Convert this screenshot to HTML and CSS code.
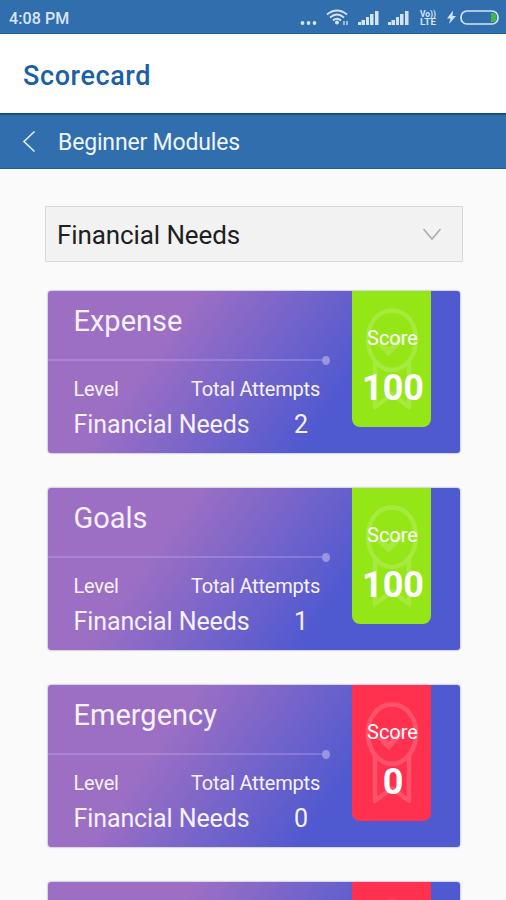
FILE: index.html
```html
<!DOCTYPE html>
<html lang="en">
<head>
<meta charset="utf-8">
<title>Scorecard</title>
<link rel="stylesheet" href="styles.css">
</head>
<body>
<svg class="defs" width="0" height="0">
  <symbol id="medal" viewBox="0 0 56 104">
    <g fill="none" stroke="currentColor" stroke-width="4.500" stroke-linejoin="round">
      <path d="M28 2.500C43 2.500 52 16 52 32C52 41 49 48 45 53V99L28 86L11 99V53C7 48 4 41 4 32C4 16 13 2.500 28 2.500ZM11 53C21 65 35 65 45 53"/>
      <path d="M16 35L24.500 44L39 29" stroke-width="6" stroke-linejoin="miter"/>
    </g>
  </symbol>
</svg>
<header class="status">
  <span class="time">4:08 PM</span>
  <svg class="status-icons" width="206" height="34" viewBox="300 0 206 34">
    <g fill="#d3e3f4">
      <circle cx="302.500" cy="23" r="1.900"/><circle cx="308.500" cy="23" r="1.900"/><circle cx="314.500" cy="23" r="1.900"/>
      <circle cx="337" cy="22.500" r="2"/>
      <path d="M343 21h2v4h-2zM346 21h2v4h-2z" opacity=".65"/>
      <path id="bars" d="M358 22h3v3h-3zM361.500 20h3.500v5h-3.500zM366 17h3v8h-3zM370 14h3.500v11H370zM375 11h3.500v14H375z"/>
      <use href="#bars" x="30"/>
      <path d="M453 10.500L447 18.500H450.500L449 24L456 16H452.500Z"/>
    </g>
    <g fill="none" stroke="#d3e3f4" stroke-width="2">
      <path d="M327 14.500Q337 6.500 347 14.500M330 17.500Q337 11.500 344 17.500M333 20.500Q337 17 341 20.500"/>
      <rect x="461" y="11" width="37" height="13" rx="6" stroke-width="1.700"/>
    </g>
    <path d="M491 13h2.500q3 0 3 4.500t-3 4.500H491z" fill="#43b649"/>
    <g class="volte"><text x="420" y="16.500" textLength="16" lengthAdjust="spacingAndGlyphs">Vo))</text><text x="420" y="25" textLength="16" lengthAdjust="spacingAndGlyphs">LTE</text></g>
  </svg>
</header>
<div class="title"><h1>Scorecard</h1></div>
<nav class="subbar">
  <svg width="14" height="24" viewBox="0 0 14 24"><path d="M12.500 1.500L2 11.500L12.500 21.500" fill="none" stroke="#e2edf8" stroke-width="1.600"/></svg>
  <span>Beginner Modules</span>
</nav>
<main>
  <div class="select">
    <span>Financial Needs</span>
    <svg width="20" height="14" viewBox="0 0 20 14"><path d="M1.500 1L10 11L18.500 1" fill="none" stroke="#aaa" stroke-width="1.500"/></svg>
  </div>
  <article class="card">
    <div class="info">
      <h2>Expense</h2>
      <div class="rule"></div>
      <dl><div><dt>Level</dt><dd>Financial Needs</dd></div><div class="attempts"><dt>Total Attempts</dt><dd>2</dd></div></dl>
    </div>
    <div class="score good"><svg class="medal"><use href="#medal"/></svg><span>Score</span><strong>100</strong></div>
  </article>
  <article class="card">
    <div class="info">
      <h2>Goals</h2>
      <div class="rule"></div>
      <dl><div><dt>Level</dt><dd>Financial Needs</dd></div><div class="attempts"><dt>Total Attempts</dt><dd>1</dd></div></dl>
    </div>
    <div class="score good"><svg class="medal"><use href="#medal"/></svg><span>Score</span><strong>100</strong></div>
  </article>
  <article class="card">
    <div class="info">
      <h2>Emergency</h2>
      <div class="rule"></div>
      <dl><div><dt>Level</dt><dd>Financial Needs</dd></div><div class="attempts"><dt>Total Attempts</dt><dd>0</dd></div></dl>
    </div>
    <div class="score bad"><svg class="medal"><use href="#medal"/></svg><span>Score</span><strong>0</strong></div>
  </article>
  <article class="card">
    <div class="info"></div>
    <div class="score bad"><svg class="medal"><use href="#medal"/></svg></div>
  </article>
</main>
</body>
</html>
```
FILE: styles.css
```css
* { box-sizing: border-box; }
body {
  margin: 0;
  height: 900px;
  overflow: hidden;
  background: #fafafa;
  font-family: Roboto, sans-serif;
}
h1, h2, dl, dt, dd { margin: 0; font-weight: 400; }
svg { display: block; }
.defs { display: none; }
.status {
  display: flex;
  justify-content: space-between;
  height: 34px;
  padding-left: 9px;
  background: #316eae;
  border-bottom: 1px solid #1d5c9f;
  color: #d9e7f5;
}
.time { font-size: 16px; font-weight: 500; letter-spacing: .1px; line-height: 37px; }
.volte { fill: #d3e3f4; font-size: 9px; font-weight: 700; }
.title { height: 79px; padding-left: 23px; background: #fff; }
.title h1 { font-size: 27px; font-weight: 500; letter-spacing: .6px; line-height: 84px; color: #1b60a5; }
.subbar {
  display: flex;
  align-items: center;
  gap: 22px;
  height: 56px;
  padding: 1px 0 0 22px;
  background: #316eae;
  border-top: 2px solid #164f8b;
  border-bottom: 1px solid #1f5d9e;
  color: #eef5fc;
  font-size: 23px;
  letter-spacing: -.17px;
}
main {
  display: flex;
  flex-direction: column;
  gap: 35px;
  height: 731px;
  overflow: hidden;
  padding: 37px 46.5px 0 48px;
}
.select {
  display: flex;
  align-items: center;
  justify-content: space-between;
  flex: none;
  height: 56px;
  margin: 0 -3px -6px;
  padding: 1px 20px 0 11px;
  background: #f2f2f2;
  border: 1px solid #d8d8d8;
  border-radius: 1px;
  color: #202020;
  font-size: 26px;
  letter-spacing: -.1px;
}
.card {
  display: flex;
  flex: none;
  height: 162px;
  border-radius: 3px;
  background: linear-gradient(125deg, #9d6fc4 28%, #4f59d0 70%);
  box-shadow: 0 0 2px rgba(40, 40, 110, .6);
  color: #f6f1ff;
}
.info { width: 304px; }
.info h2 { height: 68px; padding-left: 25.5px; font-size: 29px; line-height: 60px; }
.rule {
  display: flex;
  justify-content: flex-end;
  align-items: center;
  width: 282px;
  height: 2px;
  background: rgba(205, 190, 255, .28);
}
.rule::after { content: ""; width: 8px; height: 9px; border-radius: 50%; background: #9a94e2; }
dl { display: flex; justify-content: space-between; padding: 16px 32px 0 25.5px; }
dl > div { white-space: nowrap; width: 0; }
dl .attempts { width: 129px; }
dt { font-size: 20px; letter-spacing: -.2px; line-height: 24px; }
dd { font-size: 25px; letter-spacing: -.1px; line-height: 47px; }
.attempts dd { padding-left: 103px; }
.score {
  display: grid;
  grid-template-rows: 61px auto;
  justify-items: center;
  width: 79px;
  height: 136px;
  border-radius: 0 0 8px 8px;
  color: #fff;
}
.score > * { grid-column: 1; }
.medal { grid-row: 1 / 3; width: 56px; height: 104px; margin: 17px 0 0 1px; color: rgba(255, 255, 255, .17); }
.score span { grid-row: 1; align-self: end; margin-left: 2px; font-size: 20px; line-height: 27px; }
.score strong { grid-row: 2; margin-left: 3px; font-size: 36px; line-height: 72px; height: 72px; }
.good { background: #95e617; }
.bad { background: #ff314f; }
```
